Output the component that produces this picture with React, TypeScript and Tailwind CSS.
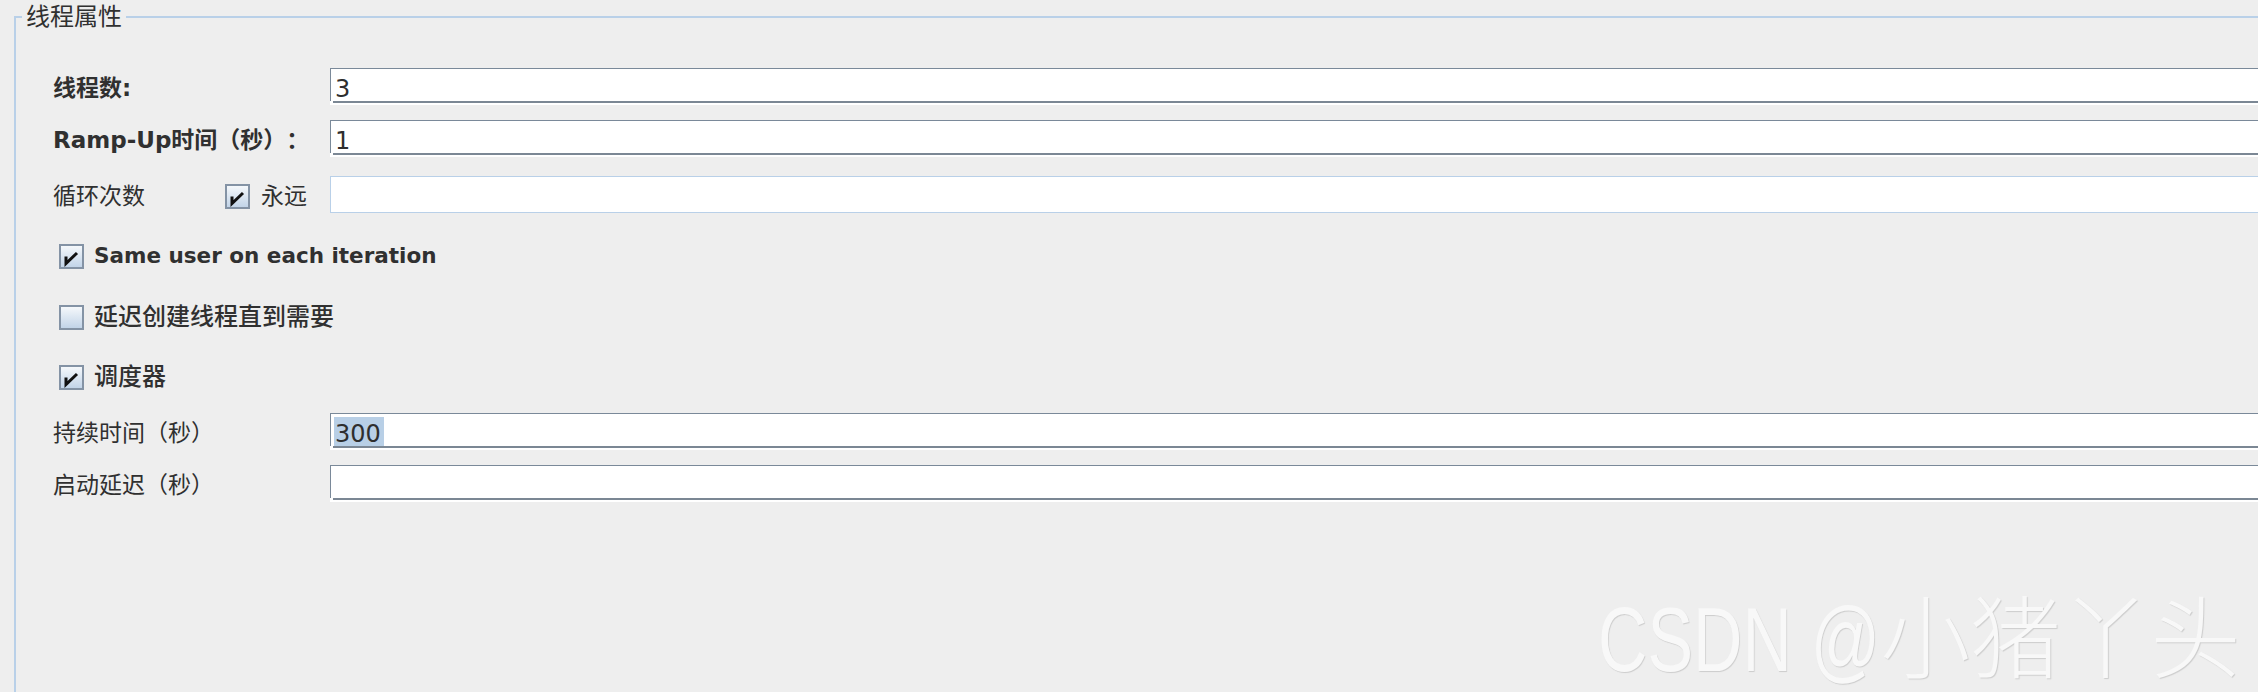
import type { ReactNode } from "react";

const FONT = "font-['DejaVu_Sans','Noto_Sans_CJK_SC',sans-serif]";

function Field({ children, selected }: { children?: ReactNode; selected?: boolean }) {
  return (
    <div className="flex-1 h-[37px] flex flex-col bg-white">
      <div className="flex-1 flex items-end border-t border-l border-[#7a8999] pl-[4px] text-[24px] text-[#2e2e2e]">
        <span className={"h-[29px] leading-[35px] " + (selected ? "bg-[#b8cfe6] -ml-[1px] pl-[1px] pr-[3px]" : "")}>
          {children}
        </span>
      </div>
      <div className="h-[2px] ml-[3px] bg-[#7b8794]" />
      <div className="h-[2px]" />
    </div>
  );
}

function Check({ checked }: { checked?: boolean }) {
  return (
    <div className="w-[25px] h-[25px] shrink-0 border-2 border-[#8493a5] bg-linear-to-b from-[#f5f8fb] to-[#c2d4e8]">
      {checked && (
        <svg width="21" height="21" viewBox="0 0 21 21">
          <path d="M5 10.5 V17.5 L16 7" fill="none" stroke="#111" strokeWidth="3" strokeLinejoin="miter" />
        </svg>
      )}
    </div>
  );
}

export default function App() {
  return (
    <div
      className={
        "relative w-full h-[692px] overflow-hidden bg-[#eeeeee] pt-[1px] text-[#303030] [text-spacing-trim:space-all] " +
        FONT
      }
    >
      <fieldset className="ml-[14px] h-[720px] border-t-2 border-l-2 border-[#b9d0e8]">
        <legend className="ml-[6px] px-[4px] text-[24px] leading-[32px]">线程属性</legend>

        <div className="pl-[37px] flex flex-col">
          <div className="mt-[35px] flex items-center">
            <div className="w-[277px] pt-[3px] text-[23px] leading-[30px] font-bold">线程数:</div>
            <Field>3</Field>
          </div>

          <div className="mt-[15px] flex items-center">
            <div className="w-[277px] pt-[3px] text-[23px] leading-[30px] font-bold">Ramp-Up时间（秒）：</div>
            <Field>1</Field>
          </div>

          <div className="mt-[19px] flex items-center">
            <div className="w-[277px] pt-[3px] flex items-center text-[23px] leading-[30px]">
              <span className="w-[172px]">循环次数</span>
              <Check checked />
              <span className="ml-[11px]">永远</span>
            </div>
            <div className="flex-1 h-[37px] bg-white border-t border-l border-b border-[#b9d0e8]" />
          </div>

          <div className="mt-[30px] flex items-center pl-[6px] h-[26px]">
            <Check checked />
            <span className="ml-[10px] text-[21.5px] font-bold">Same user on each iteration</span>
          </div>

          <div className="mt-[35px] flex items-center pl-[6px] h-[26px]">
            <Check />
            <span className="ml-[10px] text-[24px] font-medium">延迟创建线程直到需要</span>
          </div>

          <div className="mt-[34px] flex items-center pl-[6px] h-[26px]">
            <Check checked />
            <span className="ml-[10px] text-[24px] font-medium">调度器</span>
          </div>

          <div className="mt-[23px] flex items-center">
            <div className="w-[277px] pt-[3px] text-[23px] leading-[30px]">持续时间（秒）</div>
            <Field selected>300</Field>
          </div>

          <div className="mt-[15px] flex items-center">
            <div className="w-[277px] pt-[3px] text-[23px] leading-[30px]">启动延迟（秒）</div>
            <Field />
          </div>
        </div>
      </fieldset>

      <div className="pointer-events-none absolute left-[1598px] top-[595px] whitespace-nowrap text-[90px] leading-none text-[#f8f8f8] [text-shadow:1px_1px_1px_#cdcdcd] font-['Liberation_Sans','Noto_Sans_CJK_SC',sans-serif]">
        <span className="inline-block origin-left scale-x-[0.76] -mr-[89px]">CSDN @</span>
        <span className="font-light">小猪丫头</span>
      </div>
    </div>
  );
}
